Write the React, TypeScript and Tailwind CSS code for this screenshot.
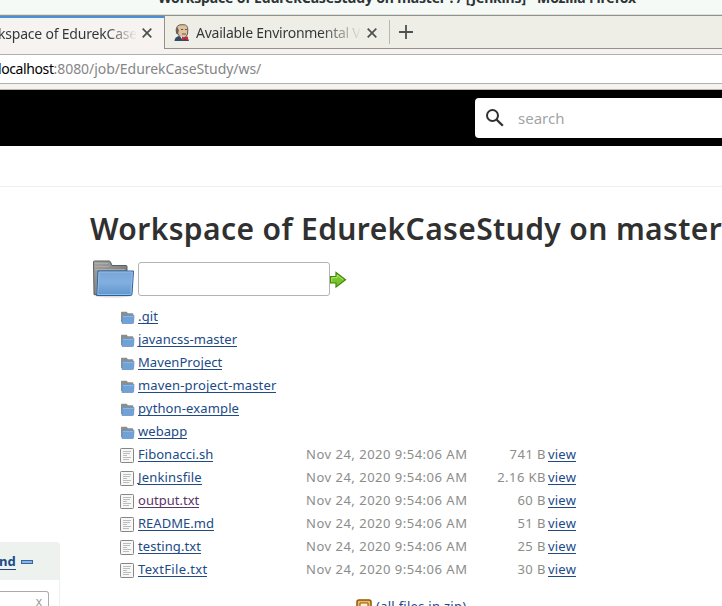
import React from "react";

const folders = [
  { name: ".git", track: "tracking-[0.15px]" },
  { name: "javancss-master", track: "tracking-[0.04px]" },
  { name: "MavenProject", track: "tracking-[0.07px]" },
  { name: "maven-project-master", track: "tracking-[0.15px]" },
  { name: "python-example", track: "tracking-[0.13px]" },
  { name: "webapp", track: "tracking-[0.07px]" },
];

const files = [
  { name: "Fibonacci.sh", size: "741 B", track: "tracking-[0.04px]" },
  { name: "Jenkinsfile", size: "2.16 KB", track: "tracking-[0.17px]" },
  { name: "output.txt", size: "60 B", visited: true, track: "tracking-[0.02px]" },
  { name: "README.md", size: "51 B", track: "tracking-[0.02px]" },
  { name: "testing.txt", size: "25 B", track: "tracking-[0.08px]" },
  { name: "TextFile.txt", size: "30 B", track: "tracking-[0.33px]" },
];

function Folder({ className }: { className: string }) {
  return (
    <svg viewBox="0 0 42 38" className={className} preserveAspectRatio="none">
      <defs>
        <linearGradient id="blue" x1="0" y1="0" x2="0" y2="1">
          <stop offset="0" stopColor="#78a5d7" />
          <stop offset=".45" stopColor="#82afdf" />
          <stop offset="1" stopColor="#5f96cf" />
        </linearGradient>
        <linearGradient id="grey" x1="0" y1="0" x2="1" y2="1">
          <stop offset="0" stopColor="#a5a6a3" />
          <stop offset="1" stopColor="#666865" />
        </linearGradient>
      </defs>
      <ellipse cx="21" cy="35.5" rx="19" ry="2" fill="#000" opacity=".14" />
      <path d="M2 34.500L1.500 2q0-1 1-1h14.500q1 0 1.500 1l1.500 3.500h14q1 0 1 1v27z" fill="url(#grey)" stroke="#5c5e5b" />
      <path d="M3 3.500h13M3 6.500h14M3 9.500h30" stroke="#b4b5b2" strokeWidth=".7" />
      <path d="M6 11h35.500L40 34q-.2 1.500-1.500 1.500h-34q.500-.3.600-1.500z" fill="url(#blue)" stroke="#2b60a3" />
      <path d="M7 12h33.300L39 33.500q0 1-1 1H5.700z" fill="none" stroke="#a7c7ea" strokeWidth=".7" />
    </svg>
  );
}

function SmallFolder() {
  return (
    <svg viewBox="0 0 15 13" className="mt-[2px] block h-[13px] w-[15px]">
      <path d="M1 11V1.500q0-.8.800-.8h5l1 1.600h4.700q.800 0 .8.700V11z" fill="#8b8e8a" />
      <path d="M2.500 4.500h11.500l-.5 7.300q0 .7-.7.700H2z" fill="#71a1d5" stroke="#6395cc" strokeWidth=".8" />
      <path d="M3 5.500h10.500" stroke="#8cb5e2" />
    </svg>
  );
}

function TextDoc() {
  return (
    <svg viewBox="0 0 14 15" className="mt-[2px] block h-[15px] w-[14px]">
      <rect x=".5" y=".5" width="13" height="14" rx=".8" fill="#f6f7f6" stroke="#858785" />
      <path d="M3 3.500h8M3 5.500h7M3 7.500h4M3 9.500h8M3 11.500h6" stroke="#babdb8" />
    </svg>
  );
}

function Butler() {
  return (
    <svg viewBox="0 0 16 17" className="block h-[17px] w-4 shrink-0">
      <path d="M.5 17q0-4 4.500-5l6 .5q3 .5 4 4.500z" fill="#2f4a66" />
      <path d="M3 7Q2 1 7.500.700 13.500.500 13.800 6l-.3 4q-1 4-4.500 4-4-.5-5-4z" fill="#dfc19d" />
      <path d="M2.500 9Q1 2 6 .8L9 .700q5-.3 4.800 5.300l-.3 4q-1 4-4.500 4-4-.5-5-4" fill="none" stroke="#574e4a" strokeWidth=".9" />
      <path d="M3.500 3L2 5.500v4l2 1 .8-4z" fill="#6b6059" />
      <path d="M7 5.500h2.200M11 5.500h2M8 10h4" stroke="#6b5650" />
      <path d="M6 12l2 3 2-1z" fill="#fff" />
      <path d="M8 12.500l3 1.500 3-1.500v4L11 15l-3 1.500z" fill="#cf2435" />
    </svg>
  );
}

function Cross() {
  return (
    <svg viewBox="0 0 10 10" className="block size-[10px] shrink-0">
      <path d="M.7.700l8.600 8.600M9.300.700L.7 9.300" stroke="#4b5050" strokeWidth="1.700" />
    </svg>
  );
}

function Link({ children, visited, track = "" }: { children: React.ReactNode; visited?: boolean; track?: string }) {
  return (
    <a className={`inline-block h-[15px] border-b leading-[14px] whitespace-nowrap ${visited ? "border-[#5c3566] text-[#5c3566]" : "border-[#204a87] text-[#204a87]"} ${track}`}>
      {children}
    </a>
  );
}

export default function App() {
  return (
    <div className="relative flex h-[606px] w-[722px] flex-col overflow-hidden bg-white font-['Noto_Sans',sans-serif]">
      <header className="shrink-0">
        <div className="flex h-[15px] items-end overflow-hidden border-b border-[#dddfdd] bg-[#f5faf7]">
          <div className="mb-[11px] ml-[158px] text-[14px] leading-[10px] font-bold tracking-[-0.17px] whitespace-nowrap text-[#2e3436]">
            Workspace of EdurekCaseStudy on master : / [Jenkins] - Mozilla Firefox
          </div>
        </div>
        <div className="flex h-[34px] border-y border-[#92928a] bg-[#eeeee6] text-[14px] text-[#303638]">
          <div className="-mb-px flex w-[165px] shrink-0 items-center border-t-2 border-r border-t-[#4a90d9] border-r-[#92928a] bg-[#f6f3f0]">
            <div className="flex w-[137px] justify-end overflow-hidden bg-linear-to-r from-[#303638] from-[78%] to-transparent bg-clip-text tracking-[-0.2px] whitespace-nowrap text-transparent">
              Workspace of EdurekCase
            </div>
            <div className="-mt-[2px] ml-[5px]"><Cross /></div>
          </div>
          <div className="flex w-[224px] shrink-0 items-center pl-[9px]">
            <Butler />
            <div className="ml-[6px] w-[166px] overflow-hidden bg-linear-to-r from-[#303638] from-[75%] to-transparent bg-clip-text tracking-[-0.25px] whitespace-nowrap text-transparent">
              Available Environmental V
            </div>
            <div className="mt-px ml-[5px]"><Cross /></div>
          </div>
          <div className="my-1 flex items-center border-l border-[#b8b8b0] pl-[9px]">
            <svg viewBox="0 0 14 14" className="size-[14px]">
              <path d="M7 0v14M0 7h14" stroke="#4b5050" strokeWidth="1.800" />
            </svg>
          </div>
        </div>
        <div className="flex h-[41px] flex-col justify-center border-b border-[#b8b6ac] bg-[#f6f2f0]">
          <div className="flex h-[30px] items-center border-y border-[#b0b0ae] bg-white pb-px text-[14px] text-[#868686]">
            <span className="-ml-[2px] tracking-[-0.4px] text-black">localhost</span>
            <span className="tracking-[-0.06px]">:8080/job/EdurekCaseStudy/ws/</span>
          </div>
        </div>
      </header>

      <div className="flex h-14 shrink-0 items-center bg-black pl-[475px]">
        <div className="flex h-10 flex-1 items-center rounded-l-[4px] bg-white pl-[11px] text-[15px] text-[#a0a5a8]">
          <svg viewBox="0 0 18 18" className="size-[18px]" fill="none" stroke="#303030">
            <circle cx="6.500" cy="6.500" r="5.500" strokeWidth="2" />
            <path d="M10.500 10.500l6.300 6.300" strokeWidth="2.300" />
          </svg>
          <span className="ml-[14px]">search</span>
        </div>
      </div>
      <div className="h-[41px] shrink-0 border-b border-[#eeefef]" />

      <main className="flex flex-1">
        <aside className="flex w-[90px] shrink-0 flex-col pt-[355px]">
          <section className="h-[70px] w-[60px] rounded-tr-[4px] border-t border-r border-[#edf1ee]">
            <div className="flex h-[37px] items-center bg-[#edf2ee] text-[13px] font-bold text-[#204a87]">
              <span className="-ml-px border-b leading-[15px]">nd</span>
              <span className="mt-px ml-[5px] h-[4px] w-3 border border-[#3465a4] bg-[#8eb6df]" />
            </div>
            <div className="mt-[11px] flex h-8 w-[49px] justify-end rounded-tr-[3px] border border-l-0 border-[#aaa] pr-[6px] text-[12px] leading-[20px] text-[#999]">x</div>
          </section>
        </aside>
        <div className="w-[632px] shrink-0 pt-[20px]">
          <h1 className="h-[49px] text-[30px] leading-[44px] font-semibold tracking-[0.38px] whitespace-nowrap text-[#303030]">
            Workspace of EdurekCaseStudy on master
          </h1>
          <div className="flex h-[49px] items-start pt-[4px]">
            <Folder className="ml-[2px] h-[38px] w-[42px] shrink-0" />
            <input className="mt-[2px] ml-1 h-[34px] w-[192px] rounded-[3px] border border-[#b3b3b3]" />
            <svg viewBox="0 0 17 17" className="mt-[11px] size-[17px]">
              <path d="M.6 5.500h5.400V1.500l9.500 7.200L6 16v-4H.6z" fill="#79c42a" stroke="#3d8906" strokeWidth="1.200" />
              <path d="M1.800 10.800V6.700h5.400V4l6 4.700" fill="none" stroke="#b6e577" />
            </svg>
          </div>
          <div className="ml-[30px] text-[13px] text-[#8b8d8b]">
            {folders.map((f) => (
              <div key={f.name} className="flex h-[23px] items-center">
                <div className="w-[18px]"><SmallFolder /></div>
                <Link track={f.track}>{f.name}</Link>
              </div>
            ))}
            {files.map((f) => (
              <div key={f.name} className="flex h-[23px] items-center">
                <div className="w-[18px]"><TextDoc /></div>
                <div className="flex w-[168px]"><Link track={f.track} visited={f.visited}>{f.name}</Link></div>
                <div className="w-[161px] tracking-[0.5px] whitespace-nowrap">Nov 24, 2020 9:54:06 AM</div>
                <div className="w-[79px] text-right tracking-[0.45px]">{f.size}</div>
                <div className="ml-[2px] flex"><Link track="tracking-[0.2px]">view</Link></div>
              </div>
            ))}
            <div className="mt-[17px] ml-[236px] flex h-4 gap-1 whitespace-nowrap text-[#204a87]">
              <svg viewBox="0 0 16 16" className="mt-px size-4">
                <path d="M1 3q0-2 2-2h10q2 0 2 2v12H1z" fill="#e8b96d" stroke="#8f5902" strokeWidth="1.500" />
                <path d="M4 4h8v5H4z" fill="#fff1cc" stroke="#8f5902" />
              </svg>
              <span className="leading-[16px] tracking-[0.27px]">(all files in zip)</span>
            </div>
          </div>
        </div>
      </main>
    </div>
  );
}
